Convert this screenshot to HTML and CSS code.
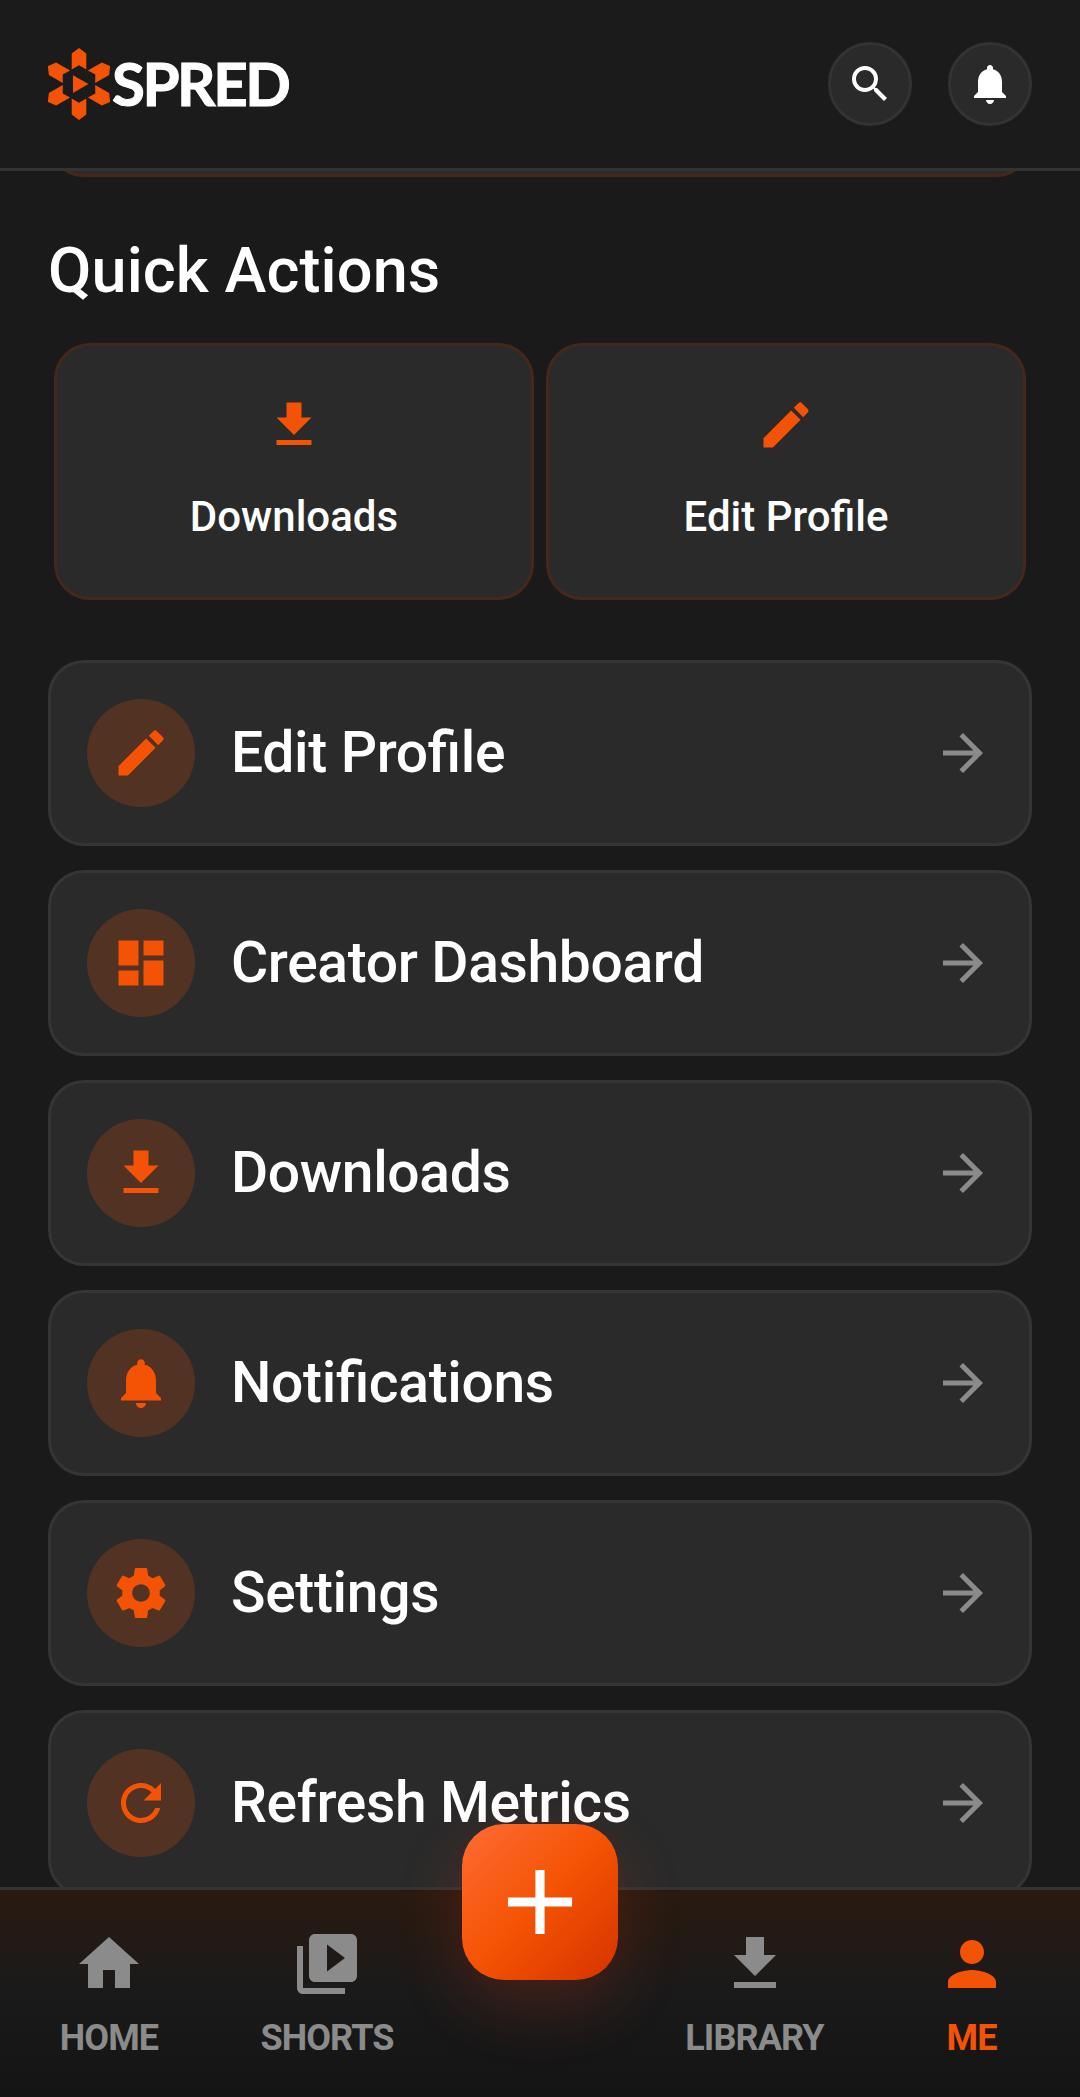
FILE: index.html
```html
<!DOCTYPE html>
<html lang="en">
<head>
  <meta charset="UTF-8">
  <meta name="viewport" content="width=device-width, initial-scale=1.0">
  <title>Spred - Me</title>
  <link rel="stylesheet" href="styles.css">
</head>
<body>
  <!-- shared icons -->
  <svg class="sprite" width="0" height="0" aria-hidden="true">
    <symbol id="search" viewBox="0 0 24 24"><path d="M15.5 14h-.79l-.28-.27A6.471 6.471 0 0 0 16 9.5 6.5 6.5 0 1 0 9.5 16c1.61 0 3.09-.59 4.23-1.57l.27.28v.79l5 4.99L20.49 19l-4.99-5zm-6 0C7.01 14 5 11.99 5 9.5S7.01 5 9.5 5 14 7.01 14 9.5 11.99 14 9.5 14z"/></symbol>
    <symbol id="bell" viewBox="0 0 24 24"><path d="M12 22c1.1 0 2-.9 2-2h-4c0 1.1.9 2 2 2zm6-6v-5c0-3.07-1.63-5.64-4.5-6.32V4c0-.83-.67-1.5-1.5-1.5s-1.5.67-1.5 1.5v.68C7.64 5.36 6 7.92 6 11v5l-2 2v1h16v-1l-2-2z"/></symbol>
    <symbol id="download" viewBox="0 0 24 24"><path d="M19 9h-4V3H9v6H5l7 7 7-7zM5 18v2h14v-2H5z"/></symbol>
    <symbol id="edit" viewBox="0 0 24 24"><path d="M3 17.25V21h3.75L17.81 9.94l-3.75-3.75L3 17.25zM20.71 7.04a.996.996 0 0 0 0-1.41l-2.34-2.34a.996.996 0 0 0-1.41 0l-1.83 1.83 3.75 3.75 1.83-1.83z"/></symbol>
    <symbol id="dashboard" viewBox="0 0 24 24"><path d="M3 13h8V3H3v10zm0 8h8v-6H3v6zm10 0h8V11h-8v10zm0-18v6h8V3h-8z"/></symbol>
    <symbol id="settings" viewBox="0 0 24 24"><path d="M19.43 12.98c.04-.32.07-.64.07-.98s-.03-.66-.07-.98l2.11-1.65c.19-.15.24-.42.12-.64l-2-3.46c-.12-.22-.39-.3-.61-.22l-2.49 1c-.52-.4-1.08-.73-1.69-.98l-.38-2.65A.488.488 0 0 0 14 2h-4c-.25 0-.46.18-.49.42l-.38 2.65c-.61.25-1.17.59-1.69.98l-2.49-1c-.23-.09-.49 0-.61.22l-2 3.46c-.13.22-.07.49.12.64l2.11 1.65c-.04.32-.07.65-.07.98s.03.66.07.98l-2.11 1.65c-.19.15-.24.42-.12.64l2 3.46c.12.22.39.3.61.22l2.49-1c.52.4 1.08.73 1.69.98l.38 2.65c.03.24.24.42.49.42h4c.25 0 .46-.18.49-.42l.38-2.65c.61-.25 1.17-.59 1.69-.98l2.49 1c.23.09.49 0 .61-.22l2-3.46c.12-.22.07-.49-.12-.64l-2.11-1.65zM12 15.5c-1.93 0-3.5-1.57-3.5-3.5s1.57-3.5 3.5-3.5 3.5 1.57 3.5 3.5-1.57 3.5-3.5 3.5z"/></symbol>
    <symbol id="refresh" viewBox="0 0 24 24"><path d="M17.65 6.35A7.958 7.958 0 0 0 12 4c-4.42 0-7.99 3.58-7.99 8s3.57 8 7.99 8c3.73 0 6.84-2.55 7.73-6h-2.08A5.99 5.99 0 0 1 12 18c-3.31 0-6-2.69-6-6s2.69-6 6-6c1.66 0 3.14.69 4.22 1.78L13 11h7V4l-2.35 2.35z"/></symbol>
    <symbol id="arrow" viewBox="0 0 24 24"><path d="M12 4l-1.41 1.41L16.17 11H4v2h12.17l-5.58 5.59L12 20l8-8z"/></symbol>
    <symbol id="home" viewBox="0 0 24 24"><path d="M10 20v-6h4v6h5v-8h3L12 3 2 12h3v8z"/></symbol>
    <symbol id="shorts" viewBox="0 0 24 24"><path d="M4 6H2v14c0 1.1.9 2 2 2h14v-2H4V6zm16-4H8c-1.1 0-2 .9-2 2v12c0 1.1.9 2 2 2h12c1.1 0 2-.9 2-2V4c0-1.1-.9-2-2-2zm-8 12.5v-9l6 4.5-6 4.5z"/></symbol>
    <symbol id="person" viewBox="0 0 24 24"><path d="M12 12c2.21 0 4-1.79 4-4s-1.79-4-4-4-4 1.79-4 4 1.79 4 4 4zm0 2c-2.67 0-8 1.34-8 4v2h16v-2c0-2.66-5.33-4-8-4z"/></symbol>
    <symbol id="plus" viewBox="0 0 24 24"><path d="M19 13h-6v6h-2v-6H5v-2h6V5h2v6h6v2z"/></symbol>
  </svg>

  <div class="app">
    <header class="header">
      <div class="logo">
        <svg class="emblem" viewBox="-31 -36 62 72">
          <defs><path id="petal" d="M-7.3-30.6L0-35.9l7.3 5.3v16.1L0-18.8l-7.3 4.3z"/></defs>
          <use href="#petal"/>
          <use href="#petal" transform="rotate(60)"/>
          <use href="#petal" transform="rotate(120)"/>
          <use href="#petal" transform="rotate(180)"/>
          <use href="#petal" transform="rotate(240)"/>
          <use href="#petal" transform="rotate(300)"/>
          <path d="M-6-8.8L9.4 0-6 9z"/>
        </svg>
        <span class="wordmark">SPRED</span>
      </div>
      <div class="header-actions">
        <button class="round-btn"><svg><use href="#search"/></svg></button>
        <button class="round-btn"><svg><use href="#bell"/></svg></button>
      </div>
    </header>

    <main class="content">
      <div class="prev-card"></div>
      <h2>Quick Actions</h2>
      <div class="quick">
        <div class="quick-card"><svg><use href="#download"/></svg><span>Downloads</span></div>
        <div class="quick-card"><svg><use href="#edit"/></svg><span>Edit Profile</span></div>
      </div>

      <div class="menu">
        <div class="menu-item">
          <div class="menu-icon"><svg><use href="#edit"/></svg></div>
          <span class="menu-text">Edit Profile</span>
          <svg class="arrow"><use href="#arrow"/></svg>
        </div>
        <div class="menu-item">
          <div class="menu-icon"><svg><use href="#dashboard"/></svg></div>
          <span class="menu-text">Creator Dashboard</span>
          <svg class="arrow"><use href="#arrow"/></svg>
        </div>
        <div class="menu-item">
          <div class="menu-icon"><svg><use href="#download"/></svg></div>
          <span class="menu-text">Downloads</span>
          <svg class="arrow"><use href="#arrow"/></svg>
        </div>
        <div class="menu-item">
          <div class="menu-icon"><svg><use href="#bell"/></svg></div>
          <span class="menu-text">Notifications</span>
          <svg class="arrow"><use href="#arrow"/></svg>
        </div>
        <div class="menu-item">
          <div class="menu-icon"><svg><use href="#settings"/></svg></div>
          <span class="menu-text">Settings</span>
          <svg class="arrow"><use href="#arrow"/></svg>
        </div>
        <div class="menu-item">
          <div class="menu-icon"><svg><use href="#refresh"/></svg></div>
          <span class="menu-text">Refresh Metrics</span>
          <svg class="arrow"><use href="#arrow"/></svg>
        </div>
      </div>
    </main>

    <nav class="tabbar">
      <div class="tab"><svg><use href="#home"/></svg><span>HOME</span></div>
      <div class="tab"><svg><use href="#shorts"/></svg><span>SHORTS</span></div>
      <div class="tab-center">
        <button class="fab"><svg><use href="#plus"/></svg></button>
      </div>
      <div class="tab"><svg><use href="#download"/></svg><span>LIBRARY</span></div>
      <div class="tab active"><svg><use href="#person"/></svg><span>ME</span></div>
    </nav>
  </div>
</body>
</html>
```

FILE: styles.css
```css
* {
  box-sizing: border-box;
}
body {
  margin: 0;
  background-color: #1a1a1a;
  color: #fff;
  font-family: Roboto, "Liberation Sans", sans-serif;
}
svg {
  display: block;
  fill: currentColor;
}
.sprite {
  position: absolute;
}
button {
  padding: 0;
  color: #fff;
}
.app {
  display: flex;
  flex-direction: column;
  height: 2097px;
  overflow: hidden;
}

/* header */
.header {
  flex: none;
  display: flex;
  align-items: center;
  justify-content: space-between;
  height: 171px;
  padding: 0 48px;
  background-color: #1b1b1b;
  border-bottom: 3px solid #333;
}
.logo {
  display: flex;
  align-items: center;
}
.emblem {
  width: 62px;
  height: 72px;
  color: #f45305;
}
.wordmark {
  margin: 0 0 2px 2px;
  font-family: Lato, sans-serif;
  font-size: 60px;
  font-weight: 700;
  line-height: 72px;
  letter-spacing: -2.5px;
  -webkit-text-stroke: 1px #fff;
}
.header-actions {
  display: flex;
  gap: 36px;
}
.round-btn {
  display: flex;
  align-items: center;
  justify-content: center;
  width: 84px;
  height: 84px;
  background-color: #2a2a2a;
  border: 3px solid #333;
  border-radius: 50%;
}
.round-btn svg {
  width: 48px;
  height: 48px;
}

/* page */
.content {
  flex: 1;
  min-height: 0;
  padding: 0 48px;
  overflow: hidden;
}
.prev-card {
  height: 80px;
  margin-top: -74px;
  background-color: #2a2a2a;
  border: 3px solid #45281b;
  border-radius: 36px;
}
h2 {
  margin: 57px 0 35px;
  font-size: 63px;
  font-weight: 500;
  line-height: 74px;
  letter-spacing: 0.12px;
}
.quick {
  display: flex;
  gap: 12px;
  margin: 0 6px 60px;
}
.quick-card {
  flex: 1;
  display: flex;
  flex-direction: column;
  align-items: center;
  height: 257px;
  padding-top: 49px;
  background-color: #2a2a2a;
  border: 3px solid #45281b;
  border-radius: 36px;
}
.quick-card svg {
  width: 60px;
  height: 60px;
  color: #f45305;
}
.quick-card span {
  margin-top: 37px;
  font-size: 42px;
  font-weight: 500;
  line-height: 50px;
}

.menu {
  display: flex;
  flex-direction: column;
  gap: 24px;
}
.menu-item {
  display: flex;
  align-items: center;
  height: 186px;
  padding: 0 36px;
  background-color: #2a2a2a;
  border: 3px solid #353535;
  border-radius: 36px;
}
.menu-icon {
  display: flex;
  align-items: center;
  justify-content: center;
  width: 108px;
  height: 108px;
  margin-right: 36px;
  background-color: rgba(244, 83, 5, 0.2);
  border-radius: 50%;
  color: #f45305;
}
.menu-icon svg,
.arrow {
  width: 60px;
  height: 60px;
}
.menu-text {
  flex: 1;
  font-size: 57px;
  font-weight: 500;
  line-height: 68px;
  letter-spacing: -0.35px;
  font-variant-ligatures: common-ligatures;
  font-feature-settings: "liga" 1;
}
.arrow {
  color: #8b8b8b;
}

/* bottom tabs */
.tabbar {
  flex: none;
  display: flex;
  height: 210px;
  background: linear-gradient(#2a1a10, #1a1a1a 50%, #141414);
  border-top: 3px solid #333;
}
.tab {
  width: 218px;
  padding-top: 38px;
  display: flex;
  flex-direction: column;
  align-items: center;
  color: #8b8b8b;
}
.tab-center ~ .tab {
  width: 217px;
}
.tab svg {
  width: 72px;
  height: 72px;
}
.tab span {
  margin-top: 17px;
  font-size: 36px;
  font-weight: 700;
  line-height: 42px;
  letter-spacing: -0.9px;
}
.tab.active {
  color: #f45305;
}
.tab-center {
  flex: 1;
  display: flex;
  justify-content: center;
  padding-right: 2px;
}
.fab {
  flex: none;
  display: flex;
  align-items: center;
  justify-content: center;
  width: 156px;
  height: 156px;
  margin-top: -66px;
  background: linear-gradient(135deg, #ff6b35, #f45303 50%, #d63300);
  border: 0;
  border-radius: 42px;
  box-shadow: 0 24px 66px rgba(244, 63, 25, 0.2);
}
.fab svg {
  width: 110px;
  height: 110px;
}
```
